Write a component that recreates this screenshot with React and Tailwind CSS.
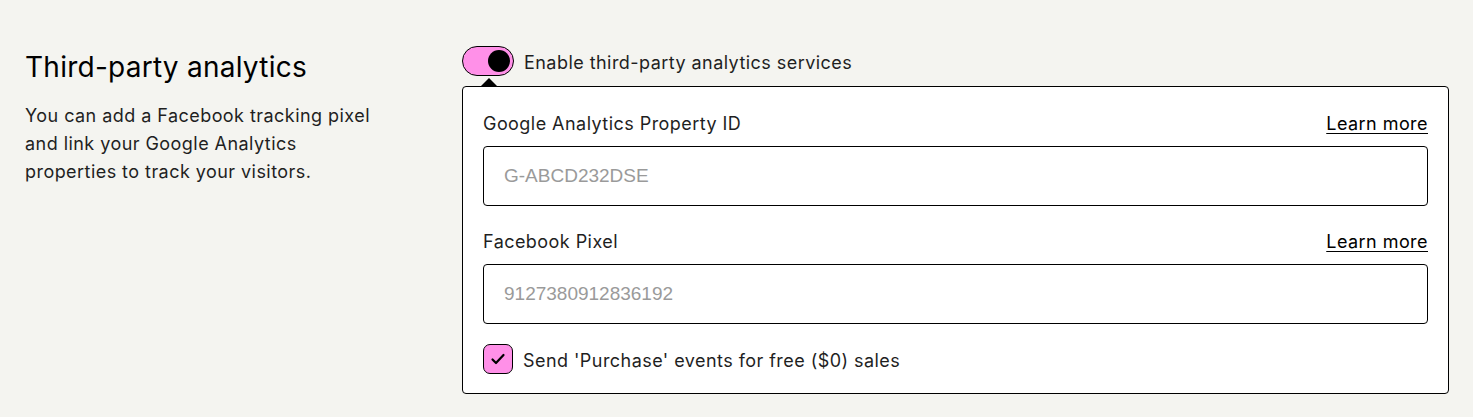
import React from "react";

const font = { fontFamily: "Inter, 'Noto Sans', sans-serif" };
const ph = { fontFamily: "'Liberation Sans', Arial, sans-serif" };

export default function App() {
  return (
    <div className="min-h-[417px] w-full bg-[#f4f4f0] text-[#1f1f1f]" style={font}>
      <div className="flex gap-6 px-6 pt-[45px] pb-6">
        <div className="w-[414px] shrink-0 pt-[2px]">
          <h2 className="pl-[1px] text-[28px] leading-[40px] font-normal tracking-[0.25px] text-black">
            Third-party analytics
          </h2>
          <p className="mt-[15px] w-[355px] pl-[1px] text-[18px] leading-[28px] tracking-[0.45px]">
            You can add a Facebook tracking pixel and link your Google Analytics properties to track your visitors.
          </p>
        </div>
        <div className="min-w-0 flex-1">
          <label className="flex h-[32px] items-center gap-[10px]">
            <span className="relative flex h-[30px] w-[52px] items-center justify-end rounded-full border border-black bg-[#ff90e8] px-[3px]">
              <span className="h-[22px] w-[22px] rounded-full bg-black" />
            </span>
            <span className="pt-[2px] text-[18px] tracking-[0.45px]">Enable third-party analytics services</span>
          </label>
          <div className="relative mt-[9px] rounded-[4px] border border-black bg-white px-5 pt-[23px] pb-[19px]">
            <span className="absolute -top-[9px] left-[18px] h-0 w-0 border-x-[8px] border-b-[8px] border-x-transparent border-b-black" />
            <div className="flex h-[26px] items-center justify-between text-[18px] tracking-[0.45px]">
              <span>Google Analytics Property ID</span>
              <a className="text-black underline underline-offset-[3px]" href="#">Learn more</a>
            </div>
            <div className="mt-[10px] flex h-[60px] items-center rounded-[4px] border border-black px-[20px]">
              <span className="text-[19px] text-[#9a9a9a]" style={ph}>G-ABCD232DSE</span>
            </div>
            <div className="mt-[22px] flex h-[26px] items-center justify-between text-[18px] tracking-[0.45px]">
              <span>Facebook Pixel</span>
              <a className="text-black underline underline-offset-[3px]" href="#">Learn more</a>
            </div>
            <div className="mt-[10px] flex h-[60px] items-center rounded-[4px] border border-black px-[20px]">
              <span className="text-[19px] text-[#9a9a9a]" style={ph}>9127380912836192</span>
            </div>
            <label className="mt-[20px] flex items-center gap-[10px]">
              <span className="flex h-[30px] w-[30px] items-center justify-center rounded-[7px] border border-black bg-[#ff90e8]">
                <svg width="18" height="18" viewBox="0 0 18 18" fill="none">
                  <path d="M3.5 9.5l3.5 3.5 7.5-8" stroke="black" strokeWidth="2.2" strokeLinecap="round" strokeLinejoin="round" />
                </svg>
              </span>
              <span className="pt-[2px] text-[18px] tracking-[0.45px]">Send 'Purchase' events for free ($0) sales</span>
            </label>
          </div>
        </div>
      </div>
    </div>
  );
}
